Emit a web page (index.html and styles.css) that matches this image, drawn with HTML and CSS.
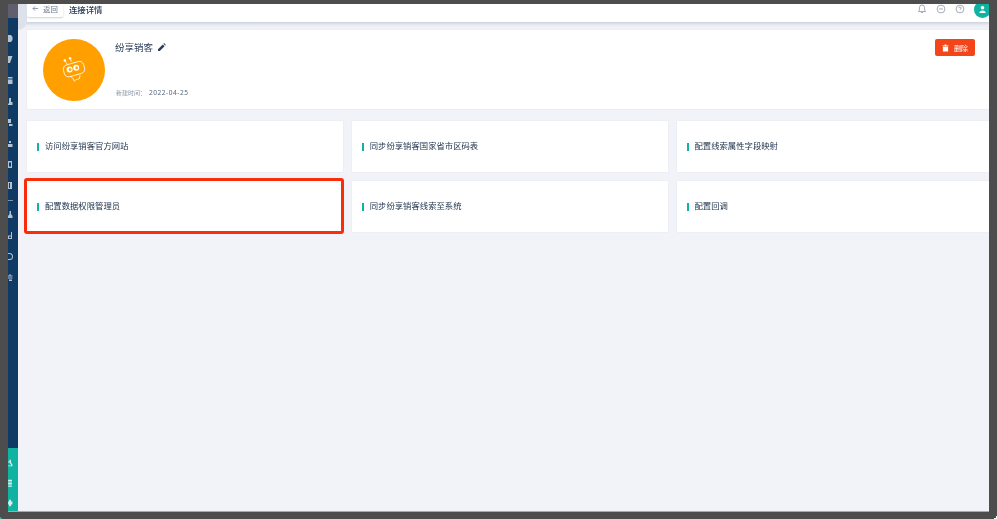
FILE: index.html
```html
<!DOCTYPE html>
<html lang="zh-CN">
<head>
<meta charset="utf-8">
<title>连接详情</title>
<link rel="stylesheet" href="styles.css">
</head>
<body>
<div class="window">
  <aside class="sidebar">
    <div class="side-head"></div>
    <div class="side-nav">
      <svg class="nav-icon" viewBox="0 0 5 21"><path d="M0 7h3l1.500 2v3l-1.500 2H0z"/></svg>
      <svg class="nav-icon" viewBox="0 0 5 21"><path d="M0 7h4.500L2 14H0z"/></svg>
      <svg class="nav-icon" viewBox="0 0 5 21"><path d="M0 7h4.500v1.500H0zM0 9.500h4.500V14H0z"/></svg>
      <svg class="nav-icon" viewBox="0 0 5 21"><path d="M1 7h2v4h1.500v3H0v-1.500h1z"/></svg>
      <svg class="nav-icon" viewBox="0 0 5 21"><path d="M0 7h3v4H0zM1 12h3.500v2H1z"/></svg>
      <svg class="nav-icon" viewBox="0 0 5 21"><path d="M1 8h2v2H1zM0 11h4.500v3H0z"/></svg>
      <svg class="nav-icon" viewBox="0 0 5 21"><path d="M0 7h4v7H0zM1 8.500v4h2v-4z" fill-rule="evenodd"/></svg>
      <svg class="nav-icon" viewBox="0 0 5 21"><path d="M0 7h4v7H0zM1 8v5h1V8z" fill-rule="evenodd"/></svg>
      <div class="side-divider"></div>
      <svg class="nav-icon" viewBox="0 0 5 21"><path d="M1.500 7h1.500v3l1.500 2v2H0v-2l1.500-2z"/></svg>
      <svg class="nav-icon" viewBox="0 0 5 21"><path d="M3 7h1v7H0v-3.500h3zM1 11.500V13h2v-1.500z" fill-rule="evenodd"/></svg>
      <svg class="nav-icon" viewBox="0 0 5 21"><path d="M0 7h1.500a3.500 3.500 0 0 1 0 7H0v-1h1.500a2.500 2.500 0 0 0 0-5H0z"/></svg>
      <svg class="nav-icon" viewBox="0 0 5 21"><path d="M1.500 7h1v1.500h2v1h-4.500v-1h1.500zM0 10.500h4.500v1H0zM1 12.500h3V14H1z"/></svg>
    </div>
    <div class="side-foot">
      <svg class="nav-icon" viewBox="0 0 5 21"><path d="M1.500 7h1.500v3l1.500 2v2H0v-1h3v-1l-1.500-2H0V9h1.500z"/></svg>
      <svg class="nav-icon" viewBox="0 0 5 21"><path d="M0 7h4v2H0zM0 10h4v2H0zM0 13h4v1.500H0z"/></svg>
      <svg class="nav-icon" viewBox="0 0 5 21"><path d="M1 7h2v2h1.500v3H3v2H1v-2H0V9h1z"/></svg>
    </div>
  </aside>

  <main class="main">
    <div class="side-arc"></div>
    <header class="topbar">
      <a class="back">
        <svg class="back-arrow" viewBox="0 0 8 8"><path d="M7 4H1.200M3.600 1.500 1.100 4l2.500 2.500"/></svg>
        <span>返回</span>
      </a>
      <h1 class="page-title">连接详情</h1>
      <div class="top-actions">
        <svg class="top-icon" viewBox="0 0 10 10"><path d="M5 1a2.600 2.600 0 0 0-2.600 2.600V6L1.500 7.500h7L7.600 6V3.600A2.600 2.600 0 0 0 5 1zM4 8.500h2"/></svg>
        <svg class="top-icon" viewBox="0 0 10 10"><circle cx="5" cy="5" r="3.900"/><path d="M3 5h4"/></svg>
        <svg class="top-icon" viewBox="0 0 10 10"><circle cx="5" cy="5" r="3.900"/><path d="M3.900 4a1.100 1.100 0 1 1 1.700 1c-.4.300-.6.500-.6 1M5 7.200v.3"/></svg>
        <span class="avatar-small">
          <svg viewBox="0 0 10 10"><circle cx="5" cy="3" r="2"/><path d="M1.500 9c0-2 1.500-3 3.500-3s3.500 1 3.500 3z"/></svg>
        </span>
      </div>
    </header>

    <div class="content">
      <section class="profile">
        <div class="logo">
          <svg viewBox="0 0 32 32">
            <g fill="none" stroke="#fff" stroke-width=".9" stroke-linejoin="round">
              <rect x="4" y="8" width="24" height="14" rx="5" transform="rotate(-16 16 15)"/>
              <path d="M8 9 6 6M13 6.500 12 3"/>
              <path d="M12 23l3 3 1.500 3 1.500-2 4-1 1-4"/>
            </g>
            <circle cx="5.500" cy="5" r="1.400" fill="#fff"/>
            <circle cx="11.500" cy="2.500" r="1.400" fill="#fff"/>
            <circle cx="11" cy="15.500" r="3.400" fill="#fff"/>
            <circle cx="18.500" cy="13.500" r="3.400" fill="#fff"/>
            <circle cx="11.500" cy="15.500" r="1.500" fill="#ff9f00"/>
            <circle cx="19" cy="13.500" r="1.500" fill="#ff9f00"/>
          </svg>
        </div>
        <div class="profile-info">
          <div class="name-row">
            <span class="name">纷享销客</span>
            <svg class="edit" viewBox="0 0 8 8"><path d="M0 8V6.200L4.800 1.400l1.800 1.800L1.800 8zM5.400.8l.7-.7 1.800 1.800-.7.7z"/></svg>
          </div>
          <div class="meta"><span class="meta-label">新建时间：</span><span class="meta-date">2022-04-25</span></div>
        </div>
        <button class="delete">
          <svg viewBox="0 0 8 8"><path d="M3 0h2v1h2.500v1h-7V1H3zM1 2.500h6V8H1z"/></svg>
          <span>删除</span>
        </button>
      </section>

      <section class="grid">
        <div class="tile"><span class="tile-text">访问纷享销客官方网站</span></div>
        <div class="tile"><span class="tile-text">同步纷享销客国家省市区码表</span></div>
        <div class="tile"><span class="tile-text">配置线索属性字段映射</span></div>
        <div class="tile tile-marked"><span class="tile-text">配置数据权限管理员</span></div>
        <div class="tile"><span class="tile-text">同步纷享销客线索至系统</span></div>
        <div class="tile"><span class="tile-text">配置回调</span></div>
      </section>
    </div>
  </main>
</div>
<div class="corner corner-left"></div>
<div class="corner corner-right"></div>
</body>
</html>
```
FILE: styles.css
```css
*, *::before, *::after { box-sizing: border-box; }

html, body { height: 100%; }

body {
  margin: 0;
  padding: 4px 8px 8px;
  background: #4d4d4d;
  overflow: hidden;
  position: relative;
  font-family: "Noto Sans CJK SC", "Noto Sans", sans-serif;
  color: #2a3e5b;
}

.window {
  display: flex;
  height: 100%;
  overflow: hidden;
  box-shadow: 0 1px 0 #a9a9a9;
  filter: blur(.3px);
}

.sidebar {
  flex: 0 0 10px;
  display: flex;
  flex-direction: column;
  background: #0e3a63;
  overflow: hidden;
}

.side-head {
  flex: 0 0 14px;
  background: #615f6e;
}

.side-nav {
  flex: 1;
  min-height: 0;
  padding-top: 10px;
  display: flex;
  flex-direction: column;
}

.nav-icon {
  display: block;
  flex: 0 0 21px;
  width: 5px;
  height: 21px;
  fill: #b4c1ce;
}

.side-divider {
  flex: 0 0 4px;
  margin-top: 4px;
  width: 5px;
  background: linear-gradient(#7f93a8 1px, transparent 1px);
}

.side-foot {
  flex: 0 0 63px;
  min-height: 0;
  overflow: hidden;
  padding-top: 5px;
  background: #10b2a2;
  display: flex;
  flex-direction: column;
}

.side-foot .nav-icon {
  flex-basis: 20px;
  height: 20px;
  fill: #d8f1ee;
}

.main {
  flex: 1;
  min-width: 0;
  position: relative;
  display: flex;
  flex-direction: column;
  background: #f1f3f8;
  overflow: hidden;
}

.side-arc {
  position: absolute;
  left: 0;
  top: 0;
  width: 9px;
  height: 26px;
  background: #dde1e9;
  border-bottom-right-radius: 9px;
  z-index: 2;
}

.topbar {
  flex: 0 0 18px;
  display: flex;
  align-items: flex-start;
  padding-left: 9px;
  background: #fff;
  box-shadow: 0 1px 3px rgba(90, 105, 130, .28);
  position: relative;
  z-index: 1;
}

.back {
  display: flex;
  align-items: flex-start;
  gap: 4px;
  width: 36px;
  height: 13px;
  padding-left: 5px;
  background: #fff;
  border-radius: 0 0 2px 2px;
  box-shadow: 0 1px 2px rgba(90, 105, 130, .3);
  font-size: 7.400px;
  line-height: 10px;
  color: #69778c;
}

.back-arrow {
  width: 7px;
  height: 7px;
  margin-top: 1px;
  fill: none;
  stroke: #69778c;
  stroke-width: .8;
}

.page-title {
  margin: 0 0 0 6px;
  font-size: 8.400px;
  font-weight: 500;
  line-height: 10px;
  color: #1f3450;
}

.top-actions {
  margin-left: auto;
  display: flex;
  align-items: flex-start;
  gap: 9px;
}

.top-icon {
  width: 10px;
  height: 10px;
  fill: none;
  stroke: #7e8a9b;
  stroke-width: .7;
}

.avatar-small {
  display: flex;
  align-items: center;
  justify-content: center;
  width: 17px;
  height: 17px;
  margin: -3px -2px 0 0;
  border-radius: 50%;
  background: #10b2a2;
}

.avatar-small svg {
  width: 9px;
  height: 9px;
  fill: #fff;
}

.content {
  flex: 1;
  padding: 8px 0 0 9px;
  background: linear-gradient(#e9ecf2, #f1f3f8 8px);
}

.profile {
  width: 966px;
  height: 79px;
  display: flex;
  padding: 9px 14px 0 16px;
  background: #fff;
  box-shadow: 0 0 1px rgba(90, 105, 130, .2);
}

.logo {
  flex: 0 0 62px;
  height: 62px;
  display: flex;
  align-items: center;
  justify-content: center;
  border-radius: 50%;
  background: #ff9f00;
}

.logo svg {
  width: 28px;
  height: 28px;
}

.profile-info {
  flex: 1;
  height: 62px;
  margin-left: 10px;
  display: flex;
  flex-direction: column;
  justify-content: space-between;
}

.name-row {
  display: flex;
  align-items: center;
  gap: 5px;
  height: 16px;
}

.name {
  font-size: 9.500px;
  line-height: 16px;
  color: #2a3e5b;
}

.edit {
  width: 8px;
  height: 8px;
  fill: #2a3e5b;
}

.meta {
  display: flex;
  align-items: center;
  height: 12px;
  margin-bottom: 2px;
  padding-left: 1px;
  font-size: 6px;
  line-height: 12px;
}

.meta-label {
  width: 33px;
  color: #8a96a6;
}

.meta-date {
  font-family: "Noto Sans", sans-serif;
  font-size: 6.600px;
  letter-spacing: .5px;
  color: #55657c;
}

.delete {
  display: flex;
  align-items: center;
  gap: 5px;
  height: 17px;
  width: 40px;
  margin-right: 4px;
  padding: 0 0 0 7px;
  border: 0;
  border-radius: 2px;
  background: #f4441a;
  font-family: inherit;
  font-size: 7px;
  color: #fff;
}

.delete svg {
  width: 7px;
  height: 8px;
  fill: #fff;
}

.grid {
  width: 966px;
  margin-top: 12px;
  display: grid;
  grid-template-columns: repeat(3, 315.750px);
  grid-auto-rows: 51px;
  gap: 9px;
}

.tile {
  position: relative;
  display: flex;
  align-items: center;
  gap: 6px;
  padding-left: 10px;
  background: #fff;
  box-shadow: 0 0 1px rgba(90, 105, 130, .14);
}

.tile::before {
  content: "";
  flex: 0 0 2px;
  height: 8px;
  background: #10b2a2;
}

.tile-text {
  padding-bottom: 3px;
  font-size: 8.350px;
  line-height: 8px;
  color: #22364f;
}

.tile-marked::after {
  content: "";
  position: absolute;
  left: -3px;
  top: -3px;
  width: 320px;
  height: 56px;
  border: 3px solid #fb2c0a;
  border-radius: 3px;
}

.corner {
  position: absolute;
  bottom: 0;
  width: 3px;
  height: 3px;
}

.corner-left {
  left: 0;
  background: linear-gradient(45deg, #10b2a2 50%, transparent 50%);
}

.corner-right {
  right: 0;
  background: linear-gradient(-45deg, #fff 50%, transparent 50%);
}
```
